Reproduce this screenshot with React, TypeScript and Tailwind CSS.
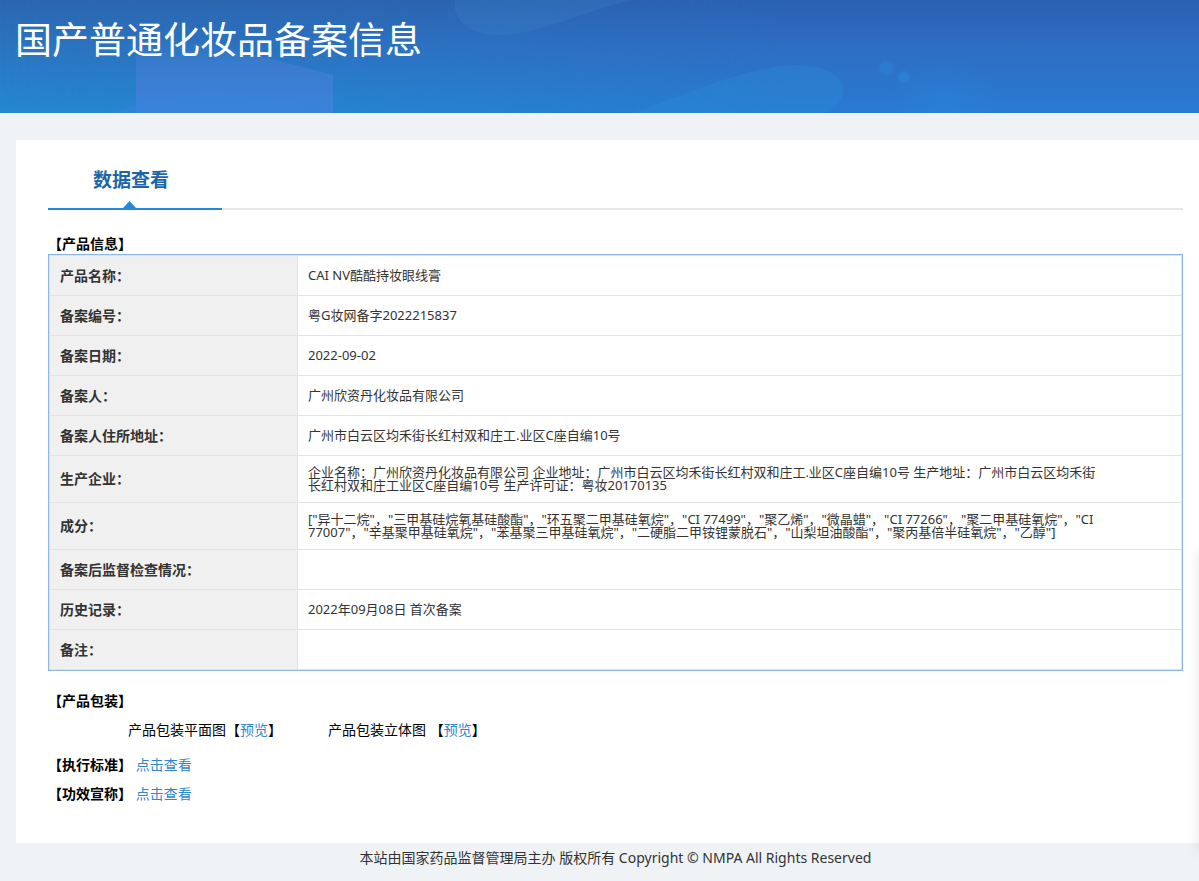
import type { ReactNode } from 'react';

interface Row {
  label: string;
  value?: string;
}

const rows: Row[] = [
  { label: '产品名称：', value: 'CAI NV酷酷持妆眼线膏' },
  { label: '备案编号：', value: '粤G妆网备字2022215837' },
  { label: '备案日期：', value: '2022-09-02' },
  { label: '备案人：', value: '广州欣资丹化妆品有限公司' },
  { label: '备案人住所地址：', value: '广州市白云区均禾街长红村双和庄工.业区C座自编10号' },
  {
    label: '生产企业：',
    value:
      '企业名称：广州欣资丹化妆品有限公司 企业地址：广州市白云区均禾街长红村双和庄工.业区C座自编10号 生产地址：广州市白云区均禾街长红村双和庄工业区C座自编10号 生产许可证：粤妆20170135',
  },
  {
    label: '成分：',
    value:
      '["异十二烷"，"三甲基硅烷氧基硅酸酯"，"环五聚二甲基硅氧烷"，"CI 77499"，"聚乙烯"，"微晶蜡"，"CI 77266"，"聚二甲基硅氧烷"，"CI 77007"，"辛基聚甲基硅氧烷"，"苯基聚三甲基硅氧烷"，"二硬脂二甲铵锂蒙脱石"，"山梨坦油酸酯"，"聚丙基倍半硅氧烷"，"乙醇"]',
  },
  { label: '备案后监督检查情况：' },
  { label: '历史记录：', value: '2022年09月08日 首次备案' },
  { label: '备注：' },
];

const TextLink = ({ children }: { children: ReactNode }) => (
  <a href="#" className="text-[#2f86cf] hover:underline">
    {children}
  </a>
);

const Banner = () => (
  <header className="relative h-[113px] overflow-hidden bg-[#2b70c4]">
    <svg className="absolute inset-0 size-full" viewBox="0 0 1199 113" preserveAspectRatio="none" aria-hidden="true">
      <defs>
        <linearGradient id="left" x1="0" y1="0" x2="0" y2="1">
          <stop offset="0" stopColor="#2c67b0" />
          <stop offset="0.5" stopColor="#2a77c2" />
          <stop offset="1" stopColor="#2588d2" />
        </linearGradient>
        <linearGradient id="right" x1="0" y1="0" x2="0" y2="1">
          <stop offset="0" stopColor="#2b61b1" />
          <stop offset="0.4" stopColor="#2e6dc3" />
          <stop offset="1" stopColor="#287bd1" />
        </linearGradient>
        <linearGradient id="fade" x1="0" y1="0" x2="1" y2="0">
          <stop offset="0" stopColor="#fff" stopOpacity="0" />
          <stop offset="0.3" stopColor="#fff" stopOpacity="0.35" />
          <stop offset="0.65" stopColor="#fff" />
        </linearGradient>
        <linearGradient id="block" x1="0" y1="0" x2="0" y2="1">
          <stop offset="0" stopColor="#3b7cce" stopOpacity="0" />
          <stop offset="0.2" stopColor="#3b7cce" stopOpacity="0.3" />
          <stop offset="0.4" stopColor="#3b7cce" />
          <stop offset="1" stopColor="#3a83dc" />
        </linearGradient>
        <radialGradient id="glow">
          <stop offset="0" stopColor="#2c86e0" stopOpacity="0.35" />
          <stop offset="1" stopColor="#2c86e0" stopOpacity="0" />
        </radialGradient>
        <radialGradient id="dot">
          <stop offset="0.6" stopColor="#2b86de" stopOpacity="0.8" />
          <stop offset="1" stopColor="#2b86de" stopOpacity="0" />
        </radialGradient>
        <mask id="fadeMask">
          <rect width="1199" height="113" fill="url(#fade)" />
        </mask>
      </defs>
      <rect width="1199" height="113" fill="url(#left)" />
      <rect width="1199" height="113" fill="url(#right)" mask="url(#fadeMask)" />
      <path d="M136 35L230 48L333 75V113H136Z" fill="url(#block)" />
      <path d="M112 113Q180 88 240 94Q290 98 333 113Z" fill="#3a83dc" opacity="0.5" />
      <path d="M455 0C452 18 466 35 500 35C545 33 580 12 632 0Z" fill="#4b94d6" opacity="0.16" />
      <path d="M632 113C690 94 745 65 800 65C850 68 855 98 825 113Z" fill="#2a8ddc" opacity="0.3" />
      <ellipse cx="945" cy="108" rx="60" ry="55" fill="url(#glow)" />
      <circle cx="886" cy="68" r="9" fill="url(#dot)" opacity="0.5" />
      <circle cx="904" cy="77" r="7" fill="url(#dot)" opacity="0.8" />
    </svg>
    <h1 className="relative px-[15px] pt-3 text-[37px] leading-[56px] text-white">国产普通化妆品备案信息</h1>
  </header>
);

export default function App() {
  return (
    <div className="relative min-h-screen overflow-hidden bg-[#eff3f6] font-['Noto_Sans','Noto_Sans_CJK_SC',sans-serif] text-sm text-black">
      <Banner />

      <main className="mt-[27px] ml-4 bg-white pt-4 pr-4 pb-[39px] pl-8">
        <div className="flex h-[54px] border-b-2 border-[#e6e6e6]">
          <h2 className="relative -mb-[2px] w-[174px] border-b-2 border-[#2389dc] pl-[45px] text-[19px] leading-[48px] font-bold text-[#1d65a8]">
            数据查看
            <svg className="absolute bottom-0 left-[75px] h-[7px] w-[13px]" viewBox="0 0 13 7" aria-hidden="true">
              <path d="M0 7L6.5 0L13 7Z" fill="#2389dc" />
            </svg>
          </h2>
        </div>

        <h3 className="mt-6 leading-5 font-bold">【产品信息】</h3>
        <div className="border border-[#8db7e9]">
          <table className="w-full border-collapse text-[#333]">
            <tbody>
              {rows.map(({ label, value }) => (
                <tr key={label} className="h-10">
                  <th
                    scope="row"
                    className="w-[248px] border border-[#e3e3e3] bg-[#f0f0f0] px-[10px] text-left leading-5 font-bold"
                  >
                    {label}
                  </th>
                  <td className="border border-[#e3e3e3] py-[10px] pr-20 pl-[10px] text-[13px] leading-[13px]">
                    {value}
                  </td>
                </tr>
              ))}
            </tbody>
          </table>
        </div>

        <h3 className="mt-5 leading-5 font-bold">【产品包装】</h3>
        <div className="mt-[9px] flex pl-20 leading-5">
          <p className="w-[200px]">
            产品包装平面图【<TextLink>预览</TextLink>】
          </p>
          <p>
            产品包装立体图 【<TextLink>预览</TextLink>】
          </p>
        </div>
        <p className="mt-[15px] leading-5">
          <strong>【执行标准】</strong> <TextLink>点击查看</TextLink>
        </p>
        <p className="mt-[9px] leading-5">
          <strong>【功效宣称】</strong> <TextLink>点击查看</TextLink>
        </p>
      </main>

      <footer className="py-[5px] pl-8 text-center leading-5 text-[#333]">
        本站由国家药品监督管理局主办 版权所有 Copyright © NMPA All Rights Reserved
      </footer>

      {/* side panel, closed: only its shadow shows */}
      <div className="absolute bottom-[30px] left-full h-[300px] w-10 shadow-[0_0_14px_rgba(0,0,0,0.1)]" />
    </div>
  );
}
